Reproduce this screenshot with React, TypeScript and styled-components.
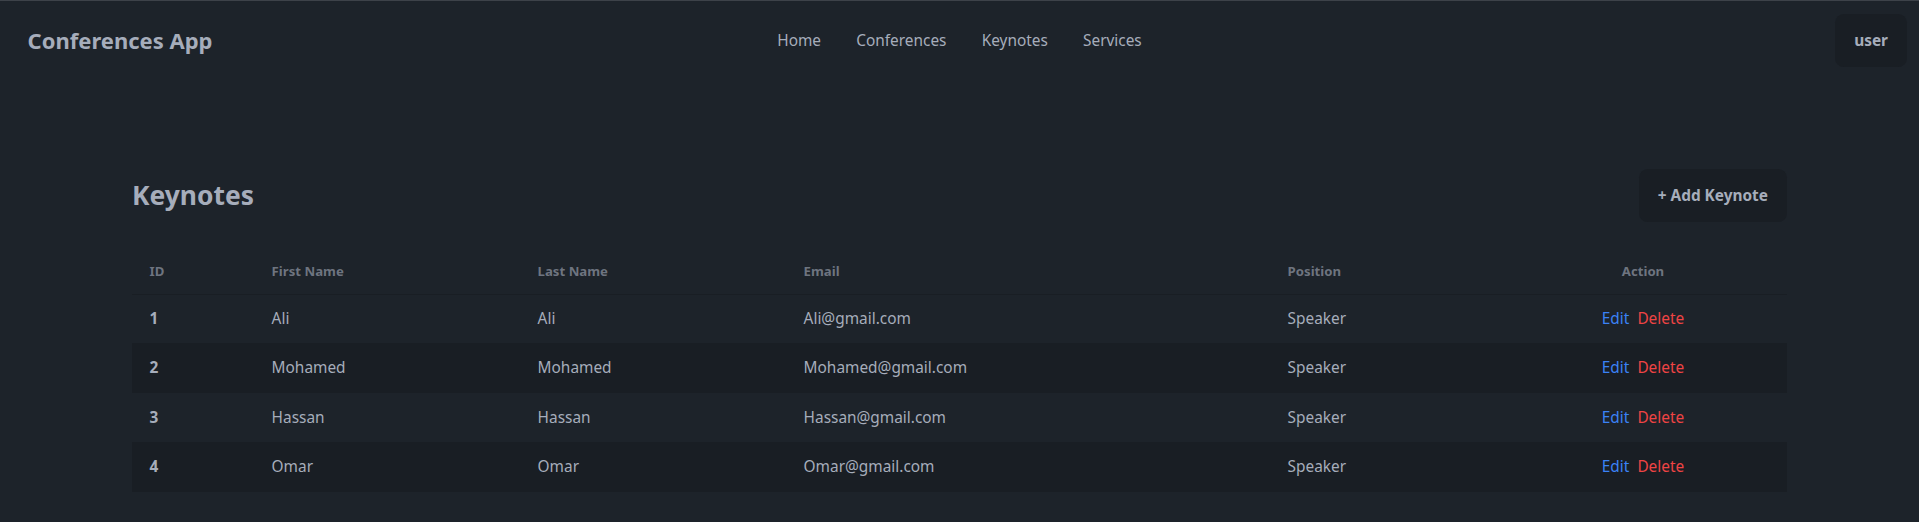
import React from "react";
import styled, { createGlobalStyle } from "styled-components";

const GlobalStyle = createGlobalStyle`
  html, body {
    margin: 0;
    padding: 0;
    background: #1d232a;
  }
  body {
    border-top: 1px solid #3d4249;
    font-family: "Noto Sans", "Open Sans", sans-serif;
    color: #a6adbb;
  }
  * { box-sizing: border-box; }
`;

const Page = styled.div`
  min-height: 521px;
  background: #1d232a;
`;

const Navbar = styled.nav`
  display: flex;
  align-items: center;
  padding: 13px 12px 13px 10px;
`;

const NavStart = styled.div`
  flex: 1;
  display: flex;
  align-items: center;
`;

const NavEnd = styled.div`
  flex: 1;
  display: flex;
  justify-content: flex-end;
  align-items: center;
`;

const Brand = styled.a`
  display: inline-flex;
  align-items: center;
  height: 52.8px;
  padding: 0 17.6px;
  font-size: 22px;
  font-weight: 700;
  color: #a6adbb;
  text-decoration: none;
  border-radius: 8.8px;
`;

const Menu = styled.ul`
  display: flex;
  list-style: none;
  margin: 2px 0 0;
  padding: 0 0 0 2px;
`;

const MenuLink = styled.a`
  display: block;
  padding: 8.8px 17.6px;
  font-size: 15.4px;
  line-height: 22px;
  color: #a6adbb;
  text-decoration: none;
  border-radius: 8.8px;
`;

const Button = styled.button`
  display: inline-flex;
  align-items: center;
  justify-content: center;
  height: 52.8px;
  padding: 0 19px;
  background: #191e24;
  border: none;
  border-radius: 8.8px;
  font-family: inherit;
  font-size: 15.4px;
  font-weight: 700;
  color: #a6adbb;
  cursor: pointer;
`;

const Main = styled.main`
  padding: 89px 132px 0;
`;

const HeaderRow = styled.div`
  display: flex;
  justify-content: space-between;
  align-items: center;
  margin-bottom: 28px;
`;

const Title = styled.h1`
  margin: 0;
  font-size: 26.4px;
  line-height: 35.2px;
  font-weight: 700;
  color: #a6adbb;
`;

const Table = styled.table`
  width: 100%;
  border-collapse: collapse;
  table-layout: fixed;
  font-size: 15.4px;
`;

const HeadCell = styled.th<{ $center?: boolean }>`
  padding: 13.2px 17.6px;
  font-size: 13.2px;
  line-height: 17.6px;
  font-weight: 700;
  color: rgba(166, 173, 187, 0.6);
  text-align: ${(p) => (p.$center ? "center" : "left")};
  border-bottom: 1px solid #191e24;
`;

const Row = styled.tr<{ $striped?: boolean }>`
  background: ${(p) => (p.$striped ? "#191e24" : "#1d232a")};
  border-bottom: 1.4px solid #191e24;
`;

const Cell = styled.td<{ $center?: boolean; $bold?: boolean }>`
  padding: 13.2px 17.6px;
  line-height: 22px;
  color: #a6adbb;
  font-weight: ${(p) => (p.$bold ? 700 : 400)};
  text-align: ${(p) => (p.$center ? "center" : "left")};
  white-space: nowrap;
`;

const Actions = styled.span`
  display: inline-flex;
  gap: 8px;
`;

const ActionLink = styled.a<{ $danger?: boolean }>`
  color: ${(p) => (p.$danger ? "#ef4444" : "#3b82f6")};
  text-decoration: none;
  cursor: pointer;
`;

const keynotes = [
  { id: 1, first: "Ali", last: "Ali", email: "Ali@gmail.com", position: "Speaker" },
  { id: 2, first: "Mohamed", last: "Mohamed", email: "Mohamed@gmail.com", position: "Speaker" },
  { id: 3, first: "Hassan", last: "Hassan", email: "Hassan@gmail.com", position: "Speaker" },
  { id: 4, first: "Omar", last: "Omar", email: "Omar@gmail.com", position: "Speaker" },
];

const colWidths = [122, 266, 266, 484, 229, 288];

export default function App() {
  return (
    <>
      <GlobalStyle />
      <Page>
        <Navbar>
          <NavStart>
            <Brand>Conferences App</Brand>
          </NavStart>
          <Menu>
            <li><MenuLink>Home</MenuLink></li>
            <li><MenuLink>Conferences</MenuLink></li>
            <li><MenuLink>Keynotes</MenuLink></li>
            <li><MenuLink>Services</MenuLink></li>
          </Menu>
          <NavEnd>
            <Button>user</Button>
          </NavEnd>
        </Navbar>
        <Main>
          <HeaderRow>
            <Title>Keynotes</Title>
            <Button>+ Add Keynote</Button>
          </HeaderRow>
          <Table>
            <colgroup>
              {colWidths.map((w, i) => (
                <col key={i} style={{ width: w }} />
              ))}
            </colgroup>
            <thead>
              <tr>
                <HeadCell>ID</HeadCell>
                <HeadCell>First Name</HeadCell>
                <HeadCell>Last Name</HeadCell>
                <HeadCell>Email</HeadCell>
                <HeadCell>Position</HeadCell>
                <HeadCell $center>Action</HeadCell>
              </tr>
            </thead>
            <tbody>
              {keynotes.map((k, i) => (
                <Row key={k.id} $striped={i % 2 === 1}>
                  <Cell $bold>{k.id}</Cell>
                  <Cell>{k.first}</Cell>
                  <Cell>{k.last}</Cell>
                  <Cell>{k.email}</Cell>
                  <Cell>{k.position}</Cell>
                  <Cell $center>
                    <Actions>
                      <ActionLink>Edit</ActionLink>
                      <ActionLink $danger>Delete</ActionLink>
                    </Actions>
                  </Cell>
                </Row>
              ))}
            </tbody>
          </Table>
        </Main>
      </Page>
    </>
  );
}
